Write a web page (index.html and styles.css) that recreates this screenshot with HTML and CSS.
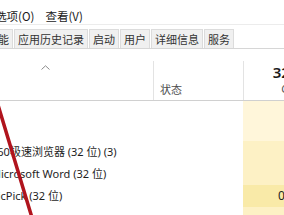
FILE: index.html
```html
<!DOCTYPE html>
<html lang="zh-CN">
<head>
<meta charset="utf-8">
<title>任务管理器</title>
<link rel="stylesheet" href="styles.css">
</head>
<body>
<div class="menubar">
  <span class="menu">文件(F)</span>
  <span class="menu">选项(O)</span>
  <span class="menu">查看(V)</span>
</div>
<div class="tabs">
  <span class="tab">进程</span>
  <span class="tab">性能</span>
  <span class="tab">应用历史记录</span>
  <span class="tab">启动</span>
  <span class="tab">用户</span>
  <span class="tab">详细信息</span>
  <span class="tab">服务</span>
</div>
<div class="table">
  <div class="head">
    <div class="hcell hname">
      <svg class="sort" width="9" height="5" viewBox="0 0 9 5"><path d="M0.5 4.5 L4.5 0.8 L8.5 4.5" fill="none" stroke="#8a8a8a" stroke-width="1"/></svg>
    </div>
    <div class="hcell hstatus"><span class="hlabel">状态</span></div>
    <div class="hcell hcpu"><span class="hpct">32%</span><span class="hlabel">CPU</span></div>
  </div>
  <div class="rows">
    <div class="row group">
      <div class="name"></div><div class="status"></div><div class="cpu c0"></div>
    </div>
    <div class="row">
      <div class="name"><span class="label">360极速浏览器 (32 位) (3)</span></div><div class="status"></div><div class="cpu c1">0%</div>
    </div>
    <div class="row">
      <div class="name"><span class="label">Microsoft Word (32 位)</span></div><div class="status"></div><div class="cpu c1">0%</div>
    </div>
    <div class="row">
      <div class="name"><span class="label">PicPick (32 位)</span></div><div class="status"></div><div class="cpu c2">0.5%</div>
    </div>
    <div class="row">
      <div class="name"></div><div class="status"></div><div class="cpu c1"></div>
    </div>
  </div>
</div>
<svg class="mark" width="284" height="215" viewBox="0 0 284 215"><line x1="-2" y1="105" x2="31.5" y2="216" stroke="#b0141d" stroke-width="3.5" stroke-linecap="round"/></svg>
</body>
</html>
```
FILE: styles.css
```css
html, body {
  margin: 0;
  width: 284px;
  height: 215px;
  overflow: hidden;
  background: #ffffff;
}
body {
  position: relative;
  font-family: "Noto Sans CJK SC", "Noto Sans", sans-serif;
  color: #1a1a1a;
}
.menubar {
  display: flex;
  gap: 11px;
  height: 25px;
  box-sizing: border-box;
  padding-top: 8px;
  margin-left: -53px;
  font-size: 11.5px;
  line-height: 17px;
  border-bottom: 1px solid #ececec;
  white-space: nowrap;
}
.tabs {
  display: flex;
  gap: 1px;
  margin: 4px 0 0 -48px;
  border-bottom: 1px solid #d6d6d6;
  font-size: 11px;
  color: #333333;
  white-space: nowrap;
}
.tab {
  padding: 0 3px;
  line-height: 18px;
  background: #f0f0f0;
  border: 1px solid #dcdcdc;
  border-bottom: none;
}
.table {
  width: 313px;
}
.head {
  display: grid;
  grid-template-columns: 153px 90px 70px;
  height: 51px;
  border-bottom: 1px solid #d0d0d0;
}
.hcell {
  display: flex;
  flex-direction: column;
}
.hname {
  padding: 16px 0 0 41px;
}
.sort {
  display: block;
}
.hstatus, .hcpu {
  margin-top: 12px;
  border-left: 1px solid #e3e3e3;
  justify-content: flex-end;
  padding-bottom: 4px;
}
.hstatus {
  padding-left: 6px;
}
.hcpu {
  align-items: flex-end;
  padding-right: 10px;
}
.hlabel {
  font-size: 11px;
  line-height: 14px;
  color: #4d4d4d;
}
.hcpu .hlabel {
  font-family: "Noto Sans", sans-serif;
  color: #555555;
}
.hpct {
  font-family: "Noto Sans", sans-serif;
  font-size: 15px;
  font-weight: 600;
  line-height: 18px;
  color: #1a1a1a;
  margin-bottom: 1px;
}
.rows {
  display: grid;
  grid-template-columns: 153px 90px 70px;
}
.row {
  display: contents;
}
.name, .status, .cpu {
  height: 22px;
  line-height: 22px;
  font-family: "Noto Sans", "Noto Sans CJK SC", sans-serif;
  font-size: 11px;
  white-space: nowrap;
}
.group .name, .group .status, .group .cpu {
  height: 40px;
}
.label {
  margin-left: -9px;
  color: #1e1e1e;
}
.cpu {
  text-align: right;
  padding-right: 8px;
  font-size: 12px;
  color: #222222;
}
.c0 { background: #fff6da; }
.c1 { background: #fdf1c5; }
.c2 { background: #f9eaa8; }
.mark {
  position: absolute;
  left: 0;
  top: 0;
  pointer-events: none;
}
```
